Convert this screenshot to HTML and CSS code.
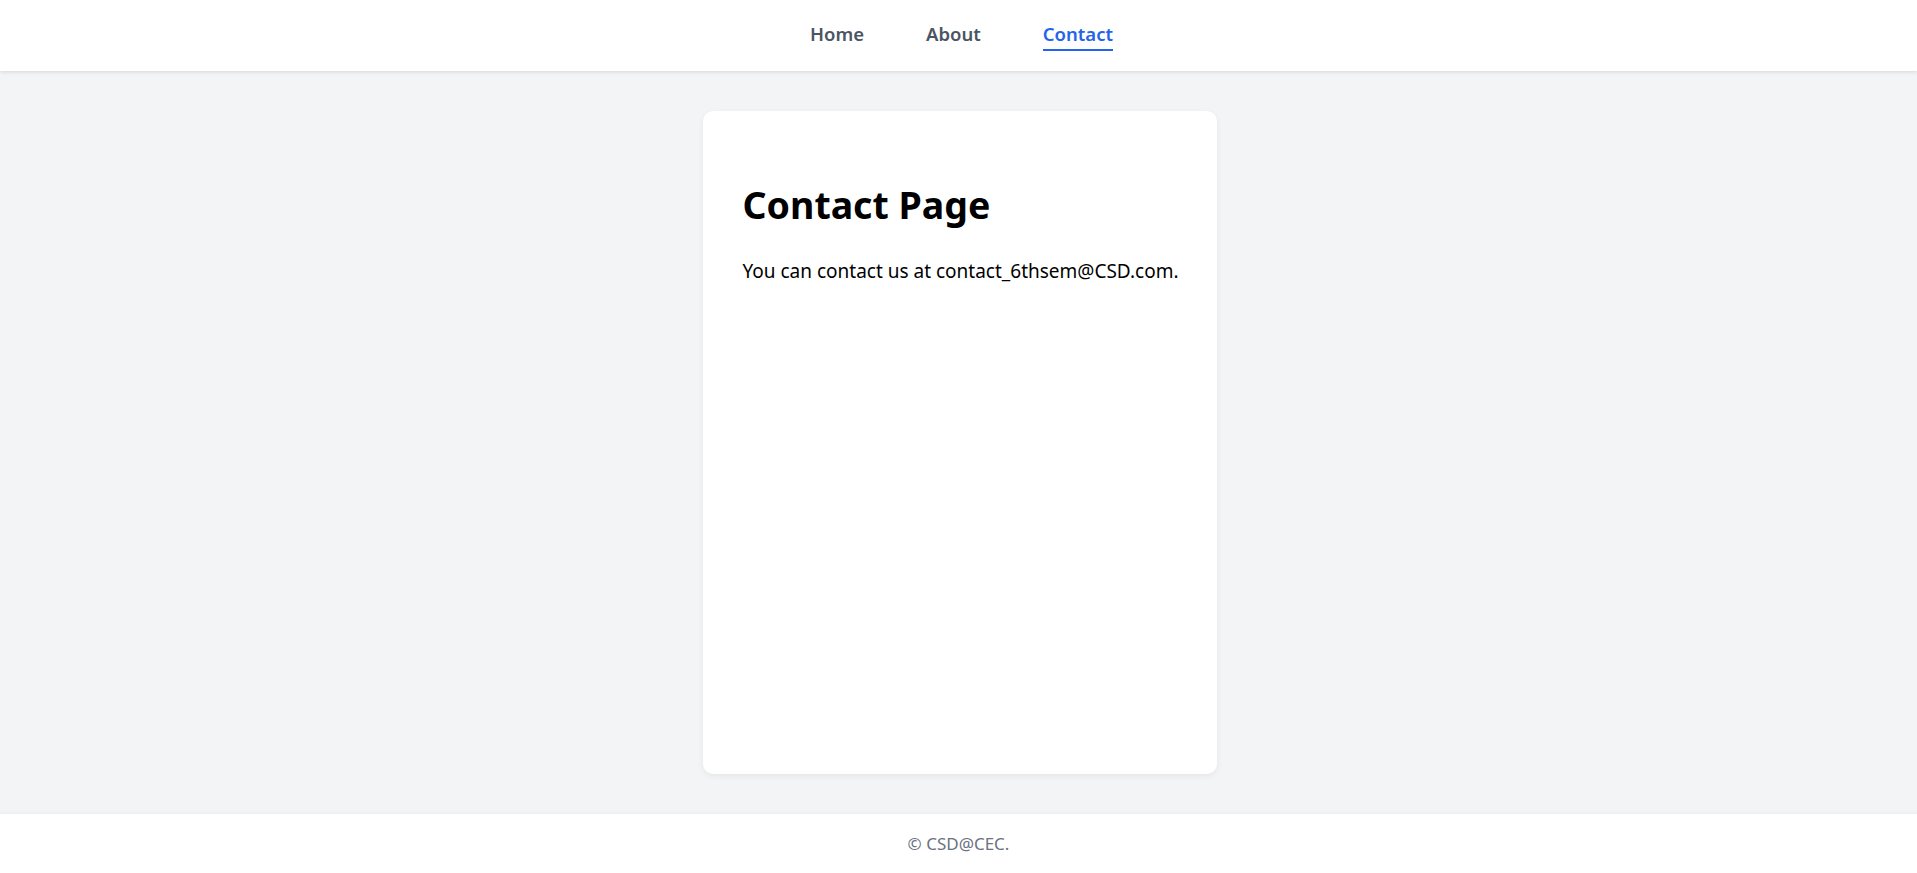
FILE: index.html
```html
<!DOCTYPE html>
<html lang="en">
<head>
<meta charset="utf-8">
<title>Contact</title>
<link rel="stylesheet" href="styles.css">
</head>
<body>
<div class="page">
  <nav class="navbar">
    <a class="nav-link" href="#">Home</a>
    <a class="nav-link" href="#">About</a>
    <a class="nav-link active" href="#">Contact</a>
  </nav>
  <main class="main">
    <section class="card">
      <h1 class="title">Contact Page</h1>
      <p class="text">You can contact us at contact_6thsem@CSD.com.</p>
    </section>
  </main>
  <footer class="footer">© CSD@CEC.</footer>
</div>
</body>
</html>
```
FILE: styles.css
```css
* { box-sizing: border-box; }
html, body { margin: 0; padding: 0; }
body {
  font-family: "Noto Sans", "Open Sans", "Liberation Sans", sans-serif;
  background: #f3f4f6;
  color: #000;
}
.page {
  min-height: 100vh;
  display: flex;
  flex-direction: column;
}
.navbar {
  height: 71px;
  background: #fff;
  display: flex;
  justify-content: center;
  align-items: center;
  gap: 62px;
  box-shadow: 0 1px 4px rgba(0,0,0,0.12);
  position: relative;
  z-index: 1;
  padding-top: 2px;
  padding-left: 6px;
}
.nav-link {
  font-size: 18.5px;
  font-weight: 600;
  color: #4b5563;
  text-decoration: none;
  padding-bottom: 3px;
  border-bottom: 2px solid transparent;
  line-height: 24px;
}
.nav-link.active {
  color: #2563eb;
  border-bottom-color: #2563eb;
}
.main {
  flex: 1;
  padding: 40px 40px 40px 42px;
  display: flex;
  justify-content: center;
}
.card {
  width: 514px;
  background: #fff;
  border-radius: 10px;
  box-shadow: 0 2px 6px rgba(0,0,0,0.06);
  padding: 72px 38px 40px 40px;
}
.title {
  margin: 0 0 30px;
  font-size: 37.5px;
  font-weight: 700;
  line-height: 44px;
}
.text {
  margin: 0;
  font-size: 19px;
  line-height: 28px;
  white-space: nowrap;
}
.footer {
  height: 59px;
  background: #fff;
  display: flex;
  justify-content: center;
  align-items: center;
  color: #6b7280;
  font-size: 17px;
  box-shadow: 0 -1px 3px rgba(0,0,0,0.04);
}
```
